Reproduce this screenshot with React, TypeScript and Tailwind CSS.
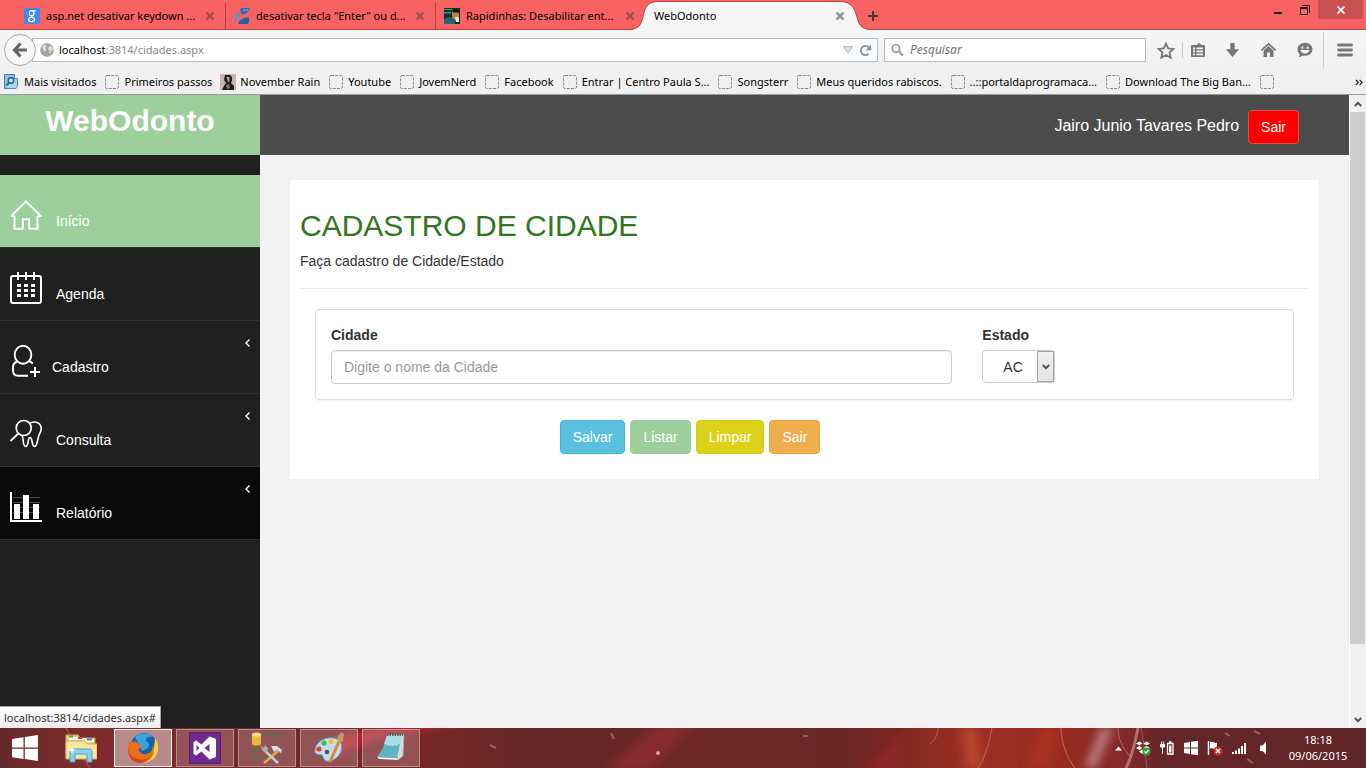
import type { ReactNode } from "react";

const UI_FONT = "font-['Noto_Sans','Open_Sans',sans-serif]";

/* ---------- Browser tabs ---------- */

function CloseGlyph({ color }: { color: string }) {
  return (
    <svg width="10" height="10" viewBox="0 0 10 10" aria-hidden="true">
      <path d="M1.5 1.5 8.5 8.5M8.5 1.5 1.5 8.5" stroke={color} strokeWidth="2.4" fill="none" />
    </svg>
  );
}

function GoogleIcon() {
  return (
    <svg width="16" height="16" viewBox="0 0 16 16" className="shrink-0" aria-hidden="true">
      <rect width="16" height="16" rx="1" fill="#4387f5" />
      <ellipse cx="7.6" cy="5.2" rx="2.3" ry="2.6" fill="none" stroke="#fff" strokeWidth="1.3" />
      <path d="M9 2.8h2.6" stroke="#fff" strokeWidth="1.2" />
      <path d="M8 7.8c-.8 1 .2 1.4 1.2 2" fill="none" stroke="#fff" strokeWidth="1.3" />
      <ellipse cx="7.6" cy="11.5" rx="3" ry="2.1" fill="none" stroke="#fff" strokeWidth="1.3" />
    </svg>
  );
}

function ForumIcon() {
  return (
    <svg width="16" height="16" viewBox="0 0 16 16" className="shrink-0" aria-hidden="true">
      <path d="M7 0h9c-1 3.500-4 6-8 6.500C6.500 5 6 2 7 0z" fill="#2b6cb0" />
      <path d="M0 14.500C0 9 2 5.500 5.200 4.500 7 7.500 4.500 11.500 0 14.500z" fill="#5a8fd0" />
      <path d="M4 16c1-4 5-6.500 11-6.500.5 2.500 0 5-1 6.500z" fill="#1f62a5" />
      <path d="M9 2.500c2 0 4-.4 5.500-1" stroke="#7fb2e6" fill="none" />
    </svg>
  );
}

function PhotoIcon() {
  return (
    <svg width="16" height="16" viewBox="0 0 16 16" className="shrink-0" aria-hidden="true">
      <rect width="16" height="16" fill="#0f2f2a" />
      <path d="M0 1h9v1H0zM0 4h7v1.500H0z" fill="#3f9c7b" />
      <path d="M8 3h6l1 3v4l-3 3-4-3z" fill="#b98242" />
      <path d="M8 2h7v2.500H9z" fill="#151010" />
      <path d="M11 9h4v5h-3z" fill="#f2ead2" />
      <path d="M0 11l6-2 5 4v3H0z" fill="#2a6277" />
    </svg>
  );
}

function Tab({ icon, title, last }: { icon: ReactNode; title: string; last?: boolean }) {
  return (
    <div
      className={`flex w-[210px] shrink-0 items-center border-r pr-[10px] pl-2 ${
        last ? "border-transparent" : "border-[#a8484b]"
      }`}
    >
      {icon}
      <span className="ml-1.5 flex-1 overflow-hidden whitespace-nowrap">{title}</span>
      <button type="button" aria-label="Fechar aba">
        <CloseGlyph color="#a04c50" />
      </button>
    </div>
  );
}

function TabStrip() {
  return (
    <div className="flex h-[30px] border-b border-[#b5484c] bg-[#f86263] text-[11px] text-black">
      <div className="flex pl-4">
        <div className="flex pt-[3px]">
          <Tab icon={<GoogleIcon />} title="asp.net desativar keydown ..." />
          <Tab icon={<ForumIcon />} title={'desativar tecla "Enter" ou d...'} />
          <Tab icon={<PhotoIcon />} title="Rapidinhas: Desabilitar ent..." last />
        </div>
        <div className="relative flex w-[210px] shrink-0 items-center pt-[3px] pr-[11px] pl-2">
          <svg className="absolute top-0 -left-4" width="240" height="30" viewBox="0 0 240 30" aria-hidden="true">
            <path
              d="M0 30C9 29 11 25 13 17 15 6 18 1.500 29 1.500H209C220 1.500 224 6 227 17 229 25 231 29 240 30Z"
              fill="#f6f6f6"
            />
            <path
              d="M0 29.500C9 28.500 11 25 13 17 15 6 18 1.500 29 1.500H209C220 1.500 224 6 227 17 229 25 231 28.500 240 29.500"
              fill="none"
              stroke="#b5484c"
            />
          </svg>
          <span className="relative flex-1">WebOdonto</span>
          <button type="button" aria-label="Fechar aba" className="relative">
            <CloseGlyph color="#8291a0" />
          </button>
        </div>
        <button type="button" aria-label="Nova aba" className="ml-3 pt-[3px]">
          <svg width="10" height="10" viewBox="0 0 10 10">
            <path d="M5 0v10M0 5h10" stroke="#4a3536" strokeWidth="2" />
          </svg>
        </button>
      </div>
      <div className="ml-auto flex items-start pr-[3px]">
        <button type="button" aria-label="Minimizar" className="flex h-[19px] w-[26px] items-center justify-center">
          <svg width="10" height="10" viewBox="0 0 10 10">
            <path d="M1 8h8" stroke="#1b1b1b" strokeWidth="2" />
          </svg>
        </button>
        <button type="button" aria-label="Restaurar" className="flex h-[19px] w-[27px] items-center justify-center">
          <svg width="10" height="10" viewBox="0 0 10 10">
            <path d="M2 .5h7.500V8M.5 2.500h7v7h-7zM.5 3.500h7" stroke="#1b1b1b" fill="none" />
          </svg>
        </button>
        <button type="button" aria-label="Fechar" className="flex h-[19px] w-[45px] items-center justify-center bg-[#c75050]">
          <svg width="8" height="8" viewBox="0 0 8 8">
            <path d="M.5.5l7 7M7.500.5l-7 7" stroke="#fff" strokeWidth="1.700" />
          </svg>
        </button>
      </div>
    </div>
  );
}

/* ---------- Navigation bar ---------- */

function NavButton({ label, children }: { label: string; children: ReactNode }) {
  return (
    <button type="button" aria-label={label} className="flex w-9 shrink-0 items-center justify-center">
      <svg width="16" height="16" viewBox="0 0 16 16">
        {children}
      </svg>
    </button>
  );
}

function NavBar() {
  return (
    <div className="flex h-10 items-center bg-gradient-to-b from-[#f6f6f6] to-[#f0f0f0] text-[11px]">
      <button
        type="button"
        aria-label="Voltar"
        className="relative z-10 ml-1 flex size-8 shrink-0 items-center justify-center rounded-full border border-[#a9a9a9] bg-[#f7f7f7]"
      >
        <svg width="16" height="16" viewBox="0 0 16 16">
          <path d="M8.500 1.500 2.500 8l6 6.500M3 8h12" stroke="#62666b" strokeWidth="3.200" fill="none" />
        </svg>
      </button>
      <div className="-ml-1 flex h-6 flex-1 items-center border border-[#b3bec8] bg-white pr-[5px] pl-[7px]">
        <svg width="14" height="14" viewBox="0 0 14 14" className="shrink-0" aria-hidden="true">
          <circle cx="7" cy="7" r="6.800" fill="#a3a3a3" />
          <path d="M2 4c1-1.500 2-2 3.500-2.200L7 3.500 5.500 5l1 1.500L5 8.500 3.500 7.500zM8.500 4.500l2-2 2 2 .6 2.500-1.600.8-1 3-1.500-.8.5-2.500-1.500-1z" fill="#dcdcdc" />
        </svg>
        <span className="ml-[5px] flex-1 whitespace-nowrap text-[#8a8a8a]">
          <span className="text-black">localhost</span>:3814/cidades.aspx
        </span>
        <svg width="10" height="8" viewBox="0 0 10 8" aria-hidden="true">
          <path d="M.7.7h8.600L5 7.200z" fill="#dfe3e8" stroke="#a5afba" />
        </svg>
        <button type="button" aria-label="Recarregar" className="ml-1.5">
          <svg width="13" height="13" viewBox="0 0 13 13">
            <path d="M9.500 9.800A4.500 4.500 0 1 1 9.500 3.300" fill="none" stroke="#8594a3" strokeWidth="2" />
            <path d="M12.200.6v5.600H6.600z" fill="#8594a3" />
          </svg>
        </button>
      </div>
      <label className="ml-1.5 flex h-6 w-[262px] shrink items-center border border-[#b3bec8] bg-white pl-1.5">
        <svg width="14" height="14" viewBox="0 0 14 14" aria-hidden="true">
          <circle cx="5.300" cy="5.300" r="4" fill="none" stroke="#97999b" strokeWidth="1.800" />
          <path d="M8.300 8.300 13 13" stroke="#97999b" strokeWidth="2.200" />
        </svg>
        <input
          type="text"
          aria-label="Pesquisar"
          placeholder="Pesquisar"
          className="ml-1.5 w-full bg-transparent text-xs outline-none placeholder:text-[#757575] placeholder:italic"
        />
      </label>
      <div className="ml-1 flex h-9 shrink-0 items-center">
        <button type="button" aria-label="Favoritar" className="flex w-8 items-center justify-center">
          <svg width="18" height="17" viewBox="0 0 18 17">
            <path d="M9 1.500l2.200 4.900 5.300.5-4 3.600 1.200 5.200L9 13l-4.700 2.700 1.200-5.200-4-3.600 5.300-.5z" fill="none" stroke="#74787d" strokeWidth="1.800" />
          </svg>
        </button>
        <span className="h-4 w-px bg-[#c5ccd3]" />
        <button type="button" aria-label="Lista de favoritos" className="flex w-8 items-center justify-center">
          <svg width="16" height="16" viewBox="0 0 16 16">
            <path d="M1 3h4.500L8 .8 10.500 3H13a1 1 0 0 1 1 1v10a1 1 0 0 1-1 1H1a1 1 0 0 1-1-1V4a1 1 0 0 1 1-1z" fill="#74787d" />
            <path d="M2 5.500h2v2H2zM5.500 5.500H12v1.800H5.500zM2 8.500h2v1.800H2zM5.500 8.500H12v1.800H5.500zM2 11.500h2v1.800H2zM5.500 11.500H12v1.800H5.500z" fill="#f2f2f2" />
          </svg>
        </button>
        <NavButton label="Downloads">
          <path d="M5.300 1h4.400v6.300H14L7.500 15 .8 7.300h4.500z" fill="#74787d" />
        </NavButton>
        <NavButton label="Página inicial">
          <path d="M.3 8.300 7.500 1.800l7.200 6.500" fill="none" stroke="#74787d" strokeWidth="1.700" />
          <path d="M2.500 8.500 7.500 4l5 4.500V15H9v-4.500H6V15H2.500z" fill="#74787d" />
        </NavButton>
        <NavButton label="Conversar">
          <path d="M8 .8c4.200 0 7.500 2.900 7.500 6.500s-3.300 6.500-7.500 6.500c-.8 0-1.500-.1-2.200-.3C4.800 14.500 3 15.200 1.500 15c.8-.8 1.200-1.800 1.200-2.800C1.300 11 .5 9.300.5 7.300.5 3.700 3.800.8 8 .8z" fill="#74787d" />
          <path d="M4.500 4.500h1.800v2.200H4.500zM9.700 4.500h1.800v2.200H9.700zM3.500 8h9c-.5 2.300-2.300 3.500-4.500 3.500S4 10.300 3.500 8z" fill="#f2f2f2" />
        </NavButton>
        <span className="h-full w-px bg-[#c9ced4]" />
        <button type="button" aria-label="Menu" className="flex w-[42px] items-center justify-center">
          <svg width="16" height="14" viewBox="0 0 16 14">
            <path d="M1.500 2h13M1.500 7h13M1.500 12h13" stroke="#74787d" strokeWidth="2.800" strokeLinecap="round" />
          </svg>
        </button>
      </div>
    </div>
  );
}

/* ---------- Bookmarks ---------- */

function BlankIcon() {
  return (
    <svg width="16" height="16" viewBox="0 0 16 16" className="shrink-0" aria-hidden="true">
      <rect x="1.500" y="1.500" width="13" height="13" rx="1.500" fill="none" stroke="#8a8a8a" strokeDasharray="3 1.200" />
    </svg>
  );
}

function VisitedIcon() {
  return (
    <svg width="16" height="16" viewBox="0 0 16 16" className="shrink-0" aria-hidden="true">
      <path d="M.5.5h10v14H.5z" fill="#8cc1e2" stroke="#3f86b2" />
      <path d="M10.500 4.500h3v8l-1.500 2H2" fill="#a9d3ea" stroke="#4b90ba" />
      <circle cx="7" cy="6.500" r="2.700" fill="#c9e6f5" stroke="#235f8b" strokeWidth="1.400" />
      <path d="M5 8.500 2.500 11.500" stroke="#235f8b" strokeWidth="1.800" />
    </svg>
  );
}

function PortraitIcon() {
  return (
    <svg width="16" height="16" viewBox="0 0 16 16" className="shrink-0" aria-hidden="true">
      <rect width="16" height="16" fill="#c9b4ae" />
      <path d="M5 1h5l2 2v4l-1 2 3 3v4H2l2-4 2-3-2-3z" fill="#231c1c" />
      <path d="M6.500 3h3v4L8 8.500z" fill="#b39c96" />
      <path d="M6 11l3-1 1 4-3 1z" fill="#8c7671" />
    </svg>
  );
}

const bookmarks = [
  "Primeiros passos",
  "November Rain",
  "Youtube",
  "JovemNerd",
  "Facebook",
  "Entrar | Centro Paula S...",
  "Songsterr",
  "Meus queridos rabiscos.",
  "..::portaldaprogramaca...",
  "Download The Big Ban...",
];

function BookmarksBar() {
  return (
    <nav className="flex h-[25px] items-center gap-2 border-b border-[#9b9b9b] bg-[#f0f0f0] pr-[3px] pl-1 text-[11px] text-black">
      <a href="#" className="flex items-center gap-1 whitespace-nowrap">
        <VisitedIcon />
        Mais visitados
      </a>
      {bookmarks.map((name) => (
        <a key={name} href="#" className="flex items-center gap-1 whitespace-nowrap">
          {name === "November Rain" ? <PortraitIcon /> : <BlankIcon />}
          {name}
        </a>
      ))}
      <a href="#" aria-label="Favorito">
        <BlankIcon />
      </a>
      <button type="button" aria-label="Mais favoritos" className="ml-auto">
        <svg width="8" height="7" viewBox="0 0 8 7">
          <path d="M.8.8 3.300 3.500.8 6.200M4.600.8l2.500 2.700-2.500 2.700" fill="none" stroke="#222" strokeWidth="1.200" />
        </svg>
      </button>
    </nav>
  );
}

/* ---------- Page ---------- */

const homeIcon = (
  <path d="M4.500 17V29.700h8.300v-9.400h6.400v9.400h8.300V17M1.200 17 16 2.500 30.800 17h-3.300M1.200 17h3.300" strokeWidth="2" />
);

const calendarIcon = (
  <>
    <rect x="1" y="4" width="30" height="27" rx="2" strokeWidth="2" />
    <path d="M8 0v8M16 0v8M24 0v8" strokeWidth="2" />
    <path d="M7 13.500h4M14 13.500h4M21 13.500h4M7 18.500h4M14 18.500h4M21 18.500h4M7 23.500h4M14 23.500h4M21 23.500h4" strokeWidth="3" />
  </>
);

const userIcon = (
  <>
    <ellipse cx="13" cy="9.800" rx="8.300" ry="9" strokeWidth="1.900" />
    <path d="M7 16.500C3 18 2.800 21 3 25.500c.1 3.500 2 5.300 5 5.300h10M19 16c1.500.6 2.800 1.500 3.800 2.600" strokeWidth="1.900" />
    <path d="M25 22v10M20 27h10" strokeWidth="2" />
  </>
);

const toothIcon = (
  <>
    <circle cx="13.700" cy="10" r="7.500" strokeWidth="1.700" />
    <path d="M8.300 15.500.5 23" strokeWidth="1.900" />
    <path
      d="M20 5c3.500-1.300 7.500-1 9.500 1 2.700 3 1.700 7 0 10-1.500 3-1.500 5.500-2.500 9-.9 3.600-3 4.800-4.200 1.500-.9-2.800-.9-7-2.800-7s-1.500 4.200-2.500 7c-1.100 3-3.100 2.500-3.800-.5-.7-2.800-.4-6-1.700-8.500"
      strokeWidth="1.600"
    />
  </>
);

const chartIcon = (
  <>
    <path d="M3 6.500h27M3 11.500h27M3 16.500h27M3 21.500h27" stroke="#4c4c4c" strokeWidth="1" />
    <path d="M1 1v29h31" strokeWidth="2" />
    <path d="M4 13h6v15H4zM13 4h6v24h-6zM23 13h6v15h-6z" fill="#fff" stroke="none" />
  </>
);

type MenuEntry = { label: string; icon: ReactNode; tone: string; gap: string; nested: boolean };

const menu: MenuEntry[] = [
  { label: "Início", icon: homeIcon, tone: "bg-[#9ccf9c]", gap: "gap-3.5", nested: false },
  { label: "Agenda", icon: calendarIcon, tone: "bg-[#202020]", gap: "gap-3.5", nested: false },
  { label: "Cadastro", icon: userIcon, tone: "bg-[#202020]", gap: "gap-2.5", nested: true },
  { label: "Consulta", icon: toothIcon, tone: "bg-[#202020]", gap: "gap-3.5", nested: true },
  { label: "Relatório", icon: chartIcon, tone: "bg-[#090909]", gap: "gap-3.5", nested: true },
];

function Sidebar() {
  return (
    <aside className="w-[260px] shrink-0 bg-[#202020] text-white">
      <div className="h-[60px] bg-[#9ccf9c] text-center text-[30px] leading-[52px] font-bold">WebOdonto</div>
      <nav className="mt-5">
        {menu.map((item) => (
          <a
            key={item.label}
            href="#"
            className={`flex h-[73px] border-b border-[#303030] pr-2.5 pb-4 pl-2.5 text-sm ${item.tone} ${item.gap}`}
          >
            <svg width="32" height="32" viewBox="0 0 32 32" fill="none" stroke="#fff" className="self-end" aria-hidden="true">
              {item.icon}
            </svg>
            <span className="self-end">{item.label}</span>
            {item.nested && (
              <svg width="5" height="8" viewBox="0 0 5 8" className="mt-[18px] ml-auto" aria-hidden="true">
                <path d="M4.500.5 1 4l3.500 3.500" fill="none" stroke="#fff" strokeWidth="1.400" />
              </svg>
            )}
          </a>
        ))}
      </nav>
    </aside>
  );
}

function CityForm() {
  const button = "h-[34px] rounded border px-3 text-sm text-white";
  return (
    <section className="mx-[30px] mt-[25px] bg-white px-2.5 pt-[30px] pb-[25px]">
      <h1 className="text-[30px] leading-8 text-[#32761f]">CADASTRO DE CIDADE</h1>
      <p className="mt-[9px] leading-5">Faça cadastro de Cidade/Estado</p>
      <hr className="mt-[17px] border-[#eeeeee]" />
      <form className="mx-[15px] mt-5" onSubmit={(e) => e.preventDefault()}>
        <div className="grid grid-cols-3 rounded border border-[#dddddd] py-[15px] shadow-xs">
          <div className="col-span-2 px-[15px]">
            <label htmlFor="cidade" className="block font-bold">
              Cidade
            </label>
            <input
              id="cidade"
              type="text"
              placeholder="Digite o nome da Cidade"
              className="mt-[5px] block h-[34px] w-full rounded border border-[#cccccc] px-3 shadow-[inset_0_1px_1px_rgba(0,0,0,0.075)] outline-none placeholder:text-[#999999]"
            />
          </div>
          <div className="px-[15px]">
            <label htmlFor="estado" className="block font-bold">
              Estado
            </label>
            <div className="relative mt-[5px] h-[33px] w-[73px]">
              <select
                id="estado"
                defaultValue="AC"
                className="size-full appearance-none rounded border border-[#cccccc] bg-white pl-5 outline-none"
              >
                <option>AC</option>
                <option>SP</option>
              </select>
              <span className="pointer-events-none absolute inset-y-px right-px flex w-[17px] items-center justify-center border border-[#a5a5a5] bg-gradient-to-b from-[#f0f0f0] to-[#e4e4e4]">
                <svg width="8" height="6" viewBox="0 0 8 6" aria-hidden="true">
                  <path d="M.8 1 4 4.200 7.200 1" fill="none" stroke="#505050" strokeWidth="2" />
                </svg>
              </span>
            </div>
          </div>
        </div>
        <div className="mt-5 ml-[25%] flex gap-[5px]">
          <button type="submit" className={`${button} border-[#46b8da] bg-[#5bc0de]`}>
            Salvar
          </button>
          <button type="button" className={`${button} border-[#9ccf9c] bg-[#9ccf9c]`}>
            Listar
          </button>
          <button type="reset" className={`${button} border-[#d6cb14] bg-[#dbd118]`}>
            Limpar
          </button>
          <button type="button" className={`${button} border-[#eea236] bg-[#f0ad4e]`}>
            Sair
          </button>
        </div>
      </form>
    </section>
  );
}

function Scrollbar() {
  return (
    <div className="flex w-[17px] shrink-0 flex-col border-l border-white bg-[#f0f0f0]" aria-hidden="true">
      <div className="flex h-[17px] items-center justify-center">
        <svg width="8" height="6" viewBox="0 0 8 6">
          <path d="M.8 5 4 1.800 7.200 5" fill="none" stroke="#505050" strokeWidth="2" />
        </svg>
      </div>
      <div className="mr-px flex-[8] bg-[#cdcdcd]" />
      <div className="flex-1" />
      <div className="flex h-[17px] items-center justify-center">
        <svg width="8" height="6" viewBox="0 0 8 6">
          <path d="M.8 1 4 4.200 7.200 1" fill="none" stroke="#505050" strokeWidth="2" />
        </svg>
      </div>
    </div>
  );
}

/* ---------- Taskbar ---------- */

function TaskbarBackdrop() {
  return (
    <svg
      className="absolute inset-0 size-full"
      viewBox="0 0 1366 40"
      preserveAspectRatio="none"
      aria-hidden="true"
    >
      <defs>
        <linearGradient id="bar" x1="0" x2="1" y1="0" y2="0">
          <stop offset="0" stopColor="#65292b" />
          <stop offset="0.06" stopColor="#802b2d" />
          <stop offset="0.2" stopColor="#75292c" />
          <stop offset="0.3" stopColor="#7a282a" />
          <stop offset="0.4" stopColor="#642628" />
          <stop offset="0.5" stopColor="#6e282a" />
          <stop offset="0.62" stopColor="#6b2727" />
          <stop offset="0.655" stopColor="#7d2722" />
          <stop offset="0.71" stopColor="#9d2f22" />
          <stop offset="0.78" stopColor="#962c20" />
          <stop offset="0.82" stopColor="#86292a" />
          <stop offset="0.85" stopColor="#662629" />
          <stop offset="1" stopColor="#602528" />
        </linearGradient>
        <filter id="soft" x="-20%" y="-50%" width="140%" height="200%">
          <feGaussianBlur stdDeviation="4" />
        </filter>
      </defs>
      <rect width="1366" height="40" fill="url(#bar)" />
      <g filter="url(#soft)">
        <path d="M330 30C370 12 400 2 470-4L410-8 330 12z" fill="#b82831" />
        <path d="M605 42 660-4h34L650 42z" fill="#86292f" />
        <path d="M862 44 902 4v40z" fill="#8c2525" />
        <path d="M962 0h14l6 40h-16z" fill="#b8452e" />
        <path d="M1040 0h20l-10 40h-24z" fill="#a83322" />
        <path d="M1100 0h14l-18 40h-12z" fill="#b77376" />
      </g>
      <g fill="none" stroke="#c9807c" strokeWidth="1" opacity="0.7">
        <path d="M66 0c8 14 14 26 24 40M938 0c0 6-3 12-8 16M992 0c-3 14-6 28-14 40M1061 0c0 14 6 30 14 40M1118 0c0 10 4 20 12 28" />
        <path d="M1141 0c3 14 4 28 6 40" stroke="#9b7396" />
      </g>
      <path d="M1138 0c-3 16-6 28-12 40" fill="none" stroke="#cf8d86" strokeWidth="3" opacity="0.7" />
      <path d="M490 17l6 3M611 5l3 6M1225 5l5 3M1254 3l6 3M1247 31l6 4M803 8h5" stroke="#9d5f60" strokeWidth="2" />
      <circle cx="658" cy="25" r="2" fill="#d9a2a2" />
    </svg>
  );
}

function WindowsLogo({ size }: { size: number }) {
  return (
    <svg width={size} height={size} viewBox="0 0 26 26" aria-hidden="true">
      <path d="M0 4 11.500 2.200v10.300H0zM12.800 2 26 0v12.500H12.800zM0 13.700h11.500V24L0 22.200zM12.800 13.700H26V26l-13.200-1.900z" fill="#fff" />
    </svg>
  );
}

function ExplorerArt() {
  return (
    <svg width="32" height="32" viewBox="0 0 32 32" aria-hidden="true">
      <path d="M1 3h12l2 3h15v20H1z" fill="#e9cf73" stroke="#c9a544" />
      <path d="M4 5h9v3H4z" fill="#fff" />
      <path d="M4 3.500h4v2H4z" fill="#2fae45" />
      <path d="M12 6h9v2h-9z" fill="#fff" />
      <path d="M13 5h4v2h-4z" fill="#d63f2c" />
      <path d="M20 7h9v3h-9z" fill="#fff" />
      <path d="M22 6.500h5v2h-5z" fill="#3488d8" />
      <path d="M1 9h19l2 3h10v15H1z" fill="#f6e6a0" stroke="#d4b75b" />
      <path d="M5 30V20c0-2 1-3 3-3h16c2 0 3 1 3 3v10h-5v-8H10v8z" fill="#8fd0ee" stroke="#4c9fca" />
      <path d="M7 14l1 3 3 1-3 1-1 3-1-3-3-1 3-1z" fill="#fff" />
    </svg>
  );
}

function FirefoxArt() {
  return (
    <svg width="32" height="32" viewBox="0 0 32 32" aria-hidden="true">
      <circle cx="17" cy="14" r="13" fill="#1c5fa3" />
      <path d="M8 5c5-5 13-5 18 0-4-1-8 1-7 4 3 1 4 4 2 7l-6 3z" fill="#3aa3da" />
      <path d="M28 6c4 5 4 13 1 18-3 4-8 7-13 7 6-3 9-6 10-12 1-5 2-8 2-13z" fill="#f8d23c" />
      <path d="M3 7c-.3 1.500 0 3 .5 4 1.500-1.500 4-2 6.500-1 .5 2 2 3 5 3 .5 1.500-1 3-3.500 4 .5 3.500 4 6 8 5 4-.8 6-4 6.500-8 1.500 5 .5 10-3 13-4 4-10 5-15 3C3 27.500 0 21 1 15c.3-3 1-6 2-8z" fill="#e8701d" />
      <path d="M1 17c1 5 5 9 11 10 4 .8 8 0 11-2-3 5-9 7-14 5.500C4 28.500.7 23 1 17z" fill="#cf4a1a" />
    </svg>
  );
}

function VisualStudioArt() {
  return (
    <svg width="32" height="32" viewBox="0 0 32 32" aria-hidden="true">
      <rect x=".5" y=".5" width="31" height="31" fill="#71298f" stroke="#55206e" />
      <path d="M20.500 4.500 27 7v18l-6.500 2.500-8-8L7 23.500 4.500 22V10L7 8.500l5.500 4zM20.500 12l-5 4 5 4zM7.500 13v6l3-3z" fill="#fff" fillRule="evenodd" />
    </svg>
  );
}

function SqlToolsArt() {
  return (
    <svg width="32" height="32" viewBox="0 0 32 32" aria-hidden="true">
      <path d="M1 2v10c0 2 9 2 9 0V2z" fill="#e9b93c" />
      <ellipse cx="5.500" cy="2.500" rx="4.500" ry="2" fill="#f9e08a" />
      <path d="M14 1.500h11V12M1.500 17v8H11M2 17.500h6" fill="none" stroke="#2f8e34" strokeWidth="1.500" strokeDasharray="2 1" />
      <path d="M27 19 13 31" stroke="#e3b13a" strokeWidth="2.500" />
      <path d="M12 17l15 14" stroke="#c3cad0" strokeWidth="2.500" />
      <path d="M10 14l2 5 4 1 1-4-3-3-1 3z" fill="#aab2b8" />
      <path d="M20 14l6 0 5 4-1 3-4-3-3 2z" fill="#d9dfe3" />
    </svg>
  );
}

function PaintArt() {
  return (
    <svg width="32" height="32" viewBox="0 0 32 32" aria-hidden="true">
      <path d="M2 18C3 10 12 5 20 6c7 1 10 6 8 13-2 6-8 11-15 10-3-1-2-4-4-6-3-1-8 0-7-5z" fill="#bfe0f2" stroke="#6aa5c8" />
      <circle cx="6" cy="17" r="2.600" fill="#d6432f" />
      <circle cx="11" cy="11" r="2.600" fill="#46b54a" />
      <circle cx="18" cy="9.500" r="2.600" fill="#f2c230" />
      <circle cx="14" cy="20" r="2.300" fill="#75434a" />
      <path d="M27 7 17 30" stroke="#e0872e" strokeWidth="3" />
      <path d="M24 6l4-6 3 2-1 7-4 2z" fill="#c79a62" />
    </svg>
  );
}

function NotepadArt() {
  return (
    <svg width="32" height="32" viewBox="0 0 32 32" aria-hidden="true">
      <path d="M13 3h16l-1 21-5 4z" fill="#d8dcdc" stroke="#9ba2a4" />
      <path d="M12 3h15l-5 23L2 25c4-5 8-12 10-22z" fill="#5fb3c6" />
      <path d="M12 3h15l-2 9c-6 3-11 2-16 0z" fill="#a9dbe4" />
      <path d="M2 25l20 1 1 2-19-1z" fill="#e9f4f5" />
      <path d="M12 2.500h16" stroke="#5c6568" strokeWidth="3" strokeDasharray="1.500 1" />
    </svg>
  );
}

function TaskButton({ label, active, children }: { label: string; active?: boolean; children: ReactNode }) {
  return (
    <button
      type="button"
      aria-label={label}
      className={`flex h-[38px] w-[58px] items-center justify-center border ${
        active ? "border-white/90 bg-white/45" : "border-white/35 bg-white/20"
      }`}
    >
      {children}
    </button>
  );
}

function TrayIcon({ label, children }: { label: string; children: ReactNode }) {
  return (
    <button type="button" aria-label={label} className="flex w-6 items-center justify-center">
      <svg width="16" height="16" viewBox="0 0 16 16">
        {children}
      </svg>
    </button>
  );
}

function Taskbar() {
  return (
    <footer className="relative h-10 overflow-hidden bg-[#662729]">
      <TaskbarBackdrop />
      <div className="relative flex h-full items-center">
        <button type="button" aria-label="Iniciar" className="ml-3">
          <WindowsLogo size={26} />
        </button>
        <button type="button" aria-label="Explorador de Arquivos" className="mr-[17px] ml-[27px]">
          <ExplorerArt />
        </button>
        <div className="flex gap-1">
          <TaskButton label="Firefox" active>
            <FirefoxArt />
          </TaskButton>
          <TaskButton label="Visual Studio">
            <VisualStudioArt />
          </TaskButton>
          <TaskButton label="SQL Server">
            <SqlToolsArt />
          </TaskButton>
          <TaskButton label="Paint">
            <PaintArt />
          </TaskButton>
          <TaskButton label="Bloco de notas">
            <NotepadArt />
          </TaskButton>
        </div>
        <div className="mr-[5px] ml-auto flex items-center">
          <TrayIcon label="Mostrar ícones ocultos">
            <path d="M4 10.500 7.500 6.500 11 10.500z" fill="#fff" />
          </TrayIcon>
          <TrayIcon label="Dropbox">
            <path d="M1 3.500 4.500 1.500 7.500 3.500 4.500 5.500zM8.500 3.500 11.500 1.500 15 3.500 11.500 5.500zM1 8l3.500-2L7.500 8l-3 2zM8.500 8l3-2L15 8l-3.500 2zM4 11.500l3.500-2 3.500 2-3.500 2.500z" fill="#fff" />
            <circle cx="11.500" cy="11.500" r="4" fill="#2ba42e" />
            <path d="M9.500 11.500l1.500 1.500 2.500-3" fill="none" stroke="#fff" strokeWidth="1.300" />
          </TrayIcon>
          <TrayIcon label="Energia">
            <path d="M1.500 4.500h4v2.500h-4zM2.500 1.500v3M4.500 1.500v3M3.500 7v7" fill="#fff" stroke="#fff" strokeWidth="1" />
            <path d="M8.500 3.500h5.500v10.500H8.500zM10 2h2.500" fill="none" stroke="#fff" strokeWidth="1.300" />
            <path d="M10 5.500h2.500v7H10z" fill="#fff" />
          </TrayIcon>
          <TrayIcon label="Windows">
            <path d="M1 3 7 2v5.500H1zM8 1.800 15 .8v6.700H8zM1 8.500h6V14l-6-1zM8 8.500h7v6.700l-7-1z" fill="#fff" />
          </TrayIcon>
          <TrayIcon label="Central de ações">
            <path d="M1.500 1v14" stroke="#fff" strokeWidth="1.500" />
            <path d="M3 2c3-1 4 1.500 7 .8V9C7 10 6 7.500 3 8.500z" fill="#fff" />
            <circle cx="11" cy="11" r="4.500" fill="#d9261c" />
            <path d="M9 9l4 4M13 9l-4 4" stroke="#fff" strokeWidth="1.500" />
          </TrayIcon>
          <TrayIcon label="Rede">
            <path d="M1 12h2v2H1zM4 10.500h2V14H4zM7 8.500h2V14H7zM10 6h2v8h-2zM13 3h2v11h-2z" fill="#fff" />
          </TrayIcon>
          <TrayIcon label="Volume">
            <path d="M5 5.500h2.500L11 1.500v13L7.500 11H5z" fill="#fff" />
          </TrayIcon>
          <div className="w-[86px] text-center text-[11px] leading-4 text-white">
            <div>18:18</div>
            <div>09/06/2015</div>
          </div>
        </div>
      </div>
    </footer>
  );
}

export default function App() {
  return (
    <div className={`flex min-h-screen flex-col ${UI_FONT}`}>
      <TabStrip />
      <NavBar />
      <BookmarksBar />
      <div className="relative flex flex-1 bg-[#f2f2f2] font-['Liberation_Sans',Arial,sans-serif] text-sm text-[#333333]">
        <Sidebar />
        <main className="min-w-0 flex-1">
          <header className="flex h-[60px] items-start justify-end gap-[9px] bg-[#4c4c4c] pt-[15px] pr-[50px] text-white">
            <span className="text-base leading-8">Jairo Junio Tavares Pedro</span>
            <button type="button" className="h-[34px] rounded border border-[#d9534f] bg-[#ff0000] px-3 text-sm">
              Sair
            </button>
          </header>
          <CityForm />
        </main>
        <Scrollbar />
        <div
          className={`absolute bottom-0 left-0 border-t border-r border-[#a5a5a5] bg-gradient-to-b from-white to-[#ececec] px-1 text-[11px] leading-[21px] text-[#333333] ${UI_FONT}`}
        >
          localhost:3814/cidades.aspx#
        </div>
      </div>
      <Taskbar />
    </div>
  );
}
